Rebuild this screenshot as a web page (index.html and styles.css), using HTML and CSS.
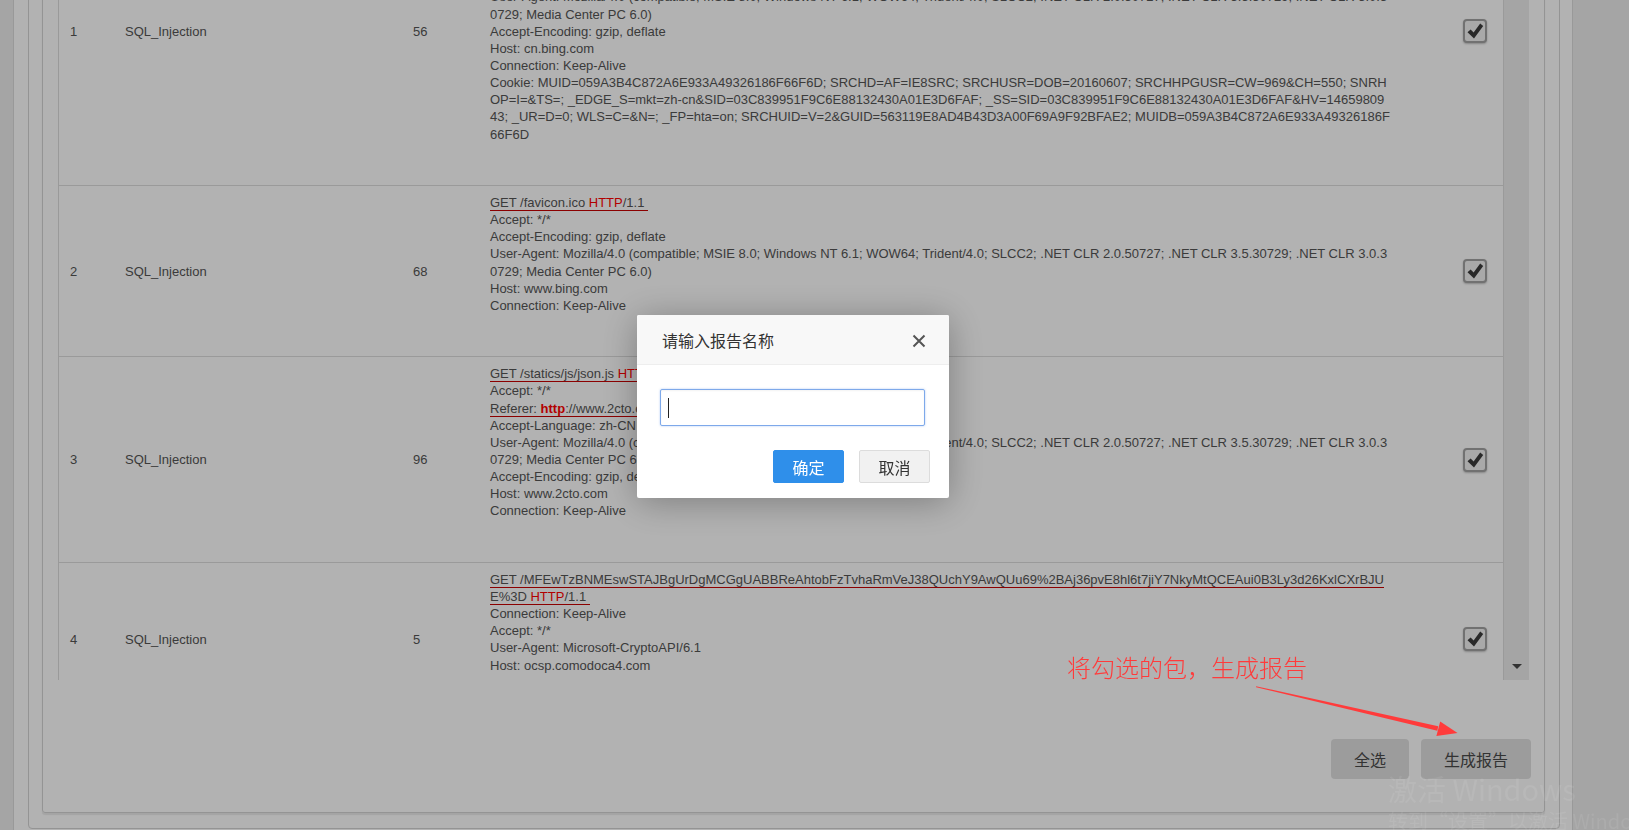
FILE: index.html
```html
<!DOCTYPE html>
<html lang="zh-CN">
<head>
<meta charset="utf-8">
<title>报告</title>
<link rel="stylesheet" href="styles.css">
</head>
<body>
<div class="page">
  <div class="panel">
    <div class="inner">
      <div class="grid-area">
        <div class="viewport">
          <table class="pkts">
            <colgroup>
              <col class="c-no"><col class="c-name"><col class="c-len"><col class="c-data"><col class="c-chk">
            </colgroup>
            <tbody>
              <tr>
                <td class="no">1</td>
                <td>SQL_Injection</td>
                <td>56</td>
                <td class="data">
                  <div class="req">
                    <div><span class="reqline">GET /fd/ls/GLinkPing.aspx?IG=2A7C0C1F3B9A4E0D9F5E1B2C3D4E5F60 <span class="proto">HTTP</span>/1.1&nbsp;</span></div>
                    <div>Accept: */*</div>
                    <div>Referer: http://cn.bing.com/</div>
                    <div>Accept-Language: zh-CN</div>
                    <div>Content-Type: text/plain;charset=UTF-8</div>
                    <div>X-Requested-With: XMLHttpRequest</div>
                    <div>User-Agent: Mozilla/4.0 (compatible; MSIE 8.0; Windows NT 6.1; WOW64; Trident/4.0; SLCC2; .NET CLR 2.0.50727; .NET CLR 3.5.30729; .NET CLR 3.0.3<br>0729; Media Center PC 6.0)</div>
                    <div>Accept-Encoding: gzip, deflate</div>
                    <div>Host: cn.bing.com</div>
                    <div>Connection: Keep-Alive</div>
                    <div>Cookie: MUID=059A3B4C872A6E933A49326186F66F6D; SRCHD=AF=IE8SRC; SRCHUSR=DOB=20160607; SRCHHPGUSR=CW=969&amp;CH=550; SNRH<br>OP=I=&amp;TS=; _EDGE_S=mkt=zh-cn&amp;SID=03C839951F9C6E88132430A01E3D6FAF; _SS=SID=03C839951F9C6E88132430A01E3D6FAF&amp;HV=14659809<br>43; _UR=D=0; WLS=C=&amp;N=; _FP=hta=on; SRCHUID=V=2&amp;GUID=563119E8AD4B43D3A00F69A9F92BFAE2; MUIDB=059A3B4C872A6E933A49326186F<br>66F6D</div>
                  </div>
                </td>
                <td class="chkcell"><span class="chk"><svg viewBox="0 0 20 20" width="20" height="20"><path d="M2.5 11.2 L5.6 8.4 L8.6 11.6 L15.2 2.6 L18.2 5 L9 17.4 Z" fill="#3c3c3c"/></svg></span></td>
              </tr>
              <tr>
                <td class="no">2</td>
                <td>SQL_Injection</td>
                <td>68</td>
                <td class="data">
                  <div class="req">
                    <div><span class="reqline">GET /favicon.ico <span class="proto">HTTP</span>/1.1&nbsp;</span></div>
                    <div>Accept: */*</div>
                    <div>Accept-Encoding: gzip, deflate</div>
                    <div>User-Agent: Mozilla/4.0 (compatible; MSIE 8.0; Windows NT 6.1; WOW64; Trident/4.0; SLCC2; .NET CLR 2.0.50727; .NET CLR 3.5.30729; .NET CLR 3.0.3<br>0729; Media Center PC 6.0)</div>
                    <div>Host: www.bing.com</div>
                    <div>Connection: Keep-Alive</div>
                  </div>
                </td>
                <td class="chkcell"><span class="chk"><svg viewBox="0 0 20 20" width="20" height="20"><path d="M2.5 11.2 L5.6 8.4 L8.6 11.6 L15.2 2.6 L18.2 5 L9 17.4 Z" fill="#3c3c3c"/></svg></span></td>
              </tr>
              <tr>
                <td class="no">3</td>
                <td>SQL_Injection</td>
                <td>96</td>
                <td class="data">
                  <div class="req">
                    <div><span class="reqline">GET /statics/js/json.js <span class="proto">HTTP</span>/1.1&nbsp;</span></div>
                    <div>Accept: */*</div>
                    <div><span class="reqline">Referer: <b class="proto">http</b>://www.2cto.com/article/201606/519380.html</span></div>
                    <div>Accept-Language: zh-CN</div>
                    <div>User-Agent: Mozilla/4.0 (compatible; MSIE 8.0; Windows NT 6.1; WOW64; Trident/4.0; SLCC2; .NET CLR 2.0.50727; .NET CLR 3.5.30729; .NET CLR 3.0.3<br>0729; Media Center PC 6.0)</div>
                    <div>Accept-Encoding: gzip, deflate</div>
                    <div>Host: www.2cto.com</div>
                    <div>Connection: Keep-Alive</div>
                  </div>
                </td>
                <td class="chkcell"><span class="chk"><svg viewBox="0 0 20 20" width="20" height="20"><path d="M2.5 11.2 L5.6 8.4 L8.6 11.6 L15.2 2.6 L18.2 5 L9 17.4 Z" fill="#3c3c3c"/></svg></span></td>
              </tr>
              <tr>
                <td class="no">4</td>
                <td>SQL_Injection</td>
                <td>5</td>
                <td class="data">
                  <div class="req">
                    <div><span class="reqline">GET /MFEwTzBNMEswSTAJBgUrDgMCGgUABBReAhtobFzTvhaRmVeJ38QUchY9AwQUu69%2BAj36pvE8hl6t7jiY7NkyMtQCEAui0B3Ly3d26KxlCXrBJU<br>E%3D <span class="proto">HTTP</span>/1.1&nbsp;</span></div>
                    <div>Connection: Keep-Alive</div>
                    <div>Accept: */*</div>
                    <div>User-Agent: Microsoft-CryptoAPI/6.1</div>
                    <div>Host: ocsp.comodoca4.com</div>
                  </div>
                </td>
                <td class="chkcell"><span class="chk"><svg viewBox="0 0 20 20" width="20" height="20"><path d="M2.5 11.2 L5.6 8.4 L8.6 11.6 L15.2 2.6 L18.2 5 L9 17.4 Z" fill="#3c3c3c"/></svg></span></td>
              </tr>
            </tbody>
          </table>
        </div>
        <div class="rail"><span class="rail-down"></span></div>
      </div>
      <div class="actions">
        <button class="btn btn-all">全选</button>
        <button class="btn btn-gen">生成报告</button>
      </div>
    </div>
  </div>
</div>

<div class="backdrop"></div>

<div class="modal">
  <div class="modal-head">
    <span class="modal-title">请输入报告名称</span>
    <svg class="modal-close" viewBox="0 0 14 14" width="14" height="14"><path d="M1.5 1.5 L12.5 12.5 M12.5 1.5 L1.5 12.5" stroke="#555" stroke-width="2" fill="none"/></svg>
  </div>
  <div class="modal-body">
    <div class="name-input"><span class="caret"></span></div>
  </div>
  <div class="modal-foot">
    <button class="mbtn mbtn-ok">确定</button>
    <button class="mbtn mbtn-cancel">取消</button>
  </div>
</div>

<div class="annot">将勾选的包，生成报告</div>
<svg class="arrow" width="1629" height="830" viewBox="0 0 1629 830">
  <polygon points="1256,686.2 1256.2,687.3 1437.3,730.8 1438.2,726.2" fill="#ff3b3b"/>
  <polygon points="1457.5,733 1440.2,721.4 1436.4,736" fill="#ff3b3b"/>
</svg>

<div class="watermark">
  <div class="wm-1">激活 Windows</div>
  <div class="wm-2">转到“设置”以激活 Windows。</div>
</div>
</body>
</html>
```

FILE: styles.css
```css
* { box-sizing: border-box; }

html, body {
  margin: 0;
  height: 830px;
  overflow: hidden;
}

body {
  position: relative;
  background: #ededed;
  font-family: "Liberation Sans", Arial, "Noto Sans CJK SC", sans-serif;
  color: #555;
}

.page {
  margin-left: 13px;
  width: 1560px;
  height: 830px;
  background: #fff;
  border-left: 1px solid #dcdcdc;
  border-right: 1px solid #dcdcdc;
  display: flex;
  flex-direction: column;
  justify-content: flex-end;
  overflow: hidden;
}

.panel {
  flex: none;
  margin: 0 12px 1px 14px;
  border: 1px solid #d4d4d4;
  border-radius: 4px;
  padding: 13px 14px 15px 13px;
}

.inner {
  border: 1px solid #d4d4d4;
  border-radius: 3px;
  padding: 15px 15px 33px 15px;
  box-shadow: 0 2px 1px rgba(0, 0, 0, 0.08);
}

.grid-area {
  display: flex;
  height: 680px;
}

.viewport {
  flex: 1;
  border-left: 1px solid #ddd;
  overflow: hidden;
}

.pkts {
  width: 1444px;
  table-layout: fixed;
  border-collapse: collapse;
  margin-top: -123.4px;
  font-size: 13px;
  line-height: 17.1428px;
  color: #555;
}

.c-no { width: 58px; }
.c-name { width: 288px; }
.c-len { width: 77px; }
.c-data { width: 934px; }
.c-chk { width: 87px; }

.pkts td {
  border-top: 1px solid #ddd;
  padding: 8px;
  vertical-align: middle;
}

.pkts td.no { padding-left: 11px; }

.req {
  white-space: nowrap;
  padding-bottom: 34.2857px;
}

.reqline {
  border-bottom: 1px solid #c80000;
}

.proto {
  color: #f00;
  font-weight: normal;
}

b.proto { font-weight: bold; }

.chkcell {
  text-align: right;
  padding-right: 16px !important;
}

.chk {
  display: inline-flex;
  align-items: center;
  justify-content: center;
  width: 24px;
  height: 24px;
  border: 2px solid #a2a2a2;
  border-radius: 4px;
  background: #f2f2f2;
  box-shadow: 0 1px 2px rgba(0, 0, 0, 0.25);
  vertical-align: middle;
}

.rail {
  width: 26px;
  background: #ececec;
  border-left: 1px solid #ddd;
  display: flex;
  flex-direction: column;
  justify-content: flex-end;
  align-items: center;
  padding-bottom: 11px;
}

.rail-down {
  width: 0;
  height: 0;
  border-left: 5px solid transparent;
  border-right: 5px solid transparent;
  border-top: 5px solid #4a4a4a;
}

.actions {
  display: flex;
  justify-content: flex-end;
  gap: 12px;
  margin-top: 59px;
  margin-right: -2px;
}

.btn {
  height: 40px;
  border: 0;
  border-radius: 4px;
  background: #e0e0e0;
  color: #4a4a4a;
  font: 16px "Noto Sans CJK SC", sans-serif;
  padding: 0;
}

.btn-all { width: 78px; }
.btn-gen { width: 110px; }

.backdrop {
  position: fixed;
  inset: 0;
  background: rgba(0, 0, 0, 0.3);
}

.modal {
  position: fixed;
  left: 637px;
  top: 315px;
  width: 312px;
  background: #fff;
  border-radius: 2px;
  box-shadow: 0 4px 36px rgba(0, 0, 0, 0.3);
  font-family: "Noto Sans CJK SC", sans-serif;
}

.modal-head {
  height: 50px;
  background: #f8f8f8;
  border-bottom: 1px solid #eee;
  border-radius: 2px 2px 0 0;
  display: flex;
  align-items: center;
  justify-content: space-between;
  padding: 0 23px 0 25px;
}

.modal-title {
  font-size: 16px;
  color: #333;
}

.modal-close { display: block; margin-top: 3px; }

.modal-body {
  padding: 24px 24px 0 23px;
}

.name-input {
  height: 37px;
  border: 1px solid #7ea9ea;
  border-radius: 2px;
  box-shadow: 0 0 2px rgba(82, 140, 236, 0.5), inset 0 1px 2px rgba(0, 0, 0, 0.05);
  display: flex;
  align-items: center;
  padding-left: 7px;
}

.caret {
  width: 1px;
  height: 20px;
  background: #222;
}

.modal-foot {
  display: flex;
  justify-content: flex-end;
  gap: 15px;
  padding: 24px 19px 15px 0;
}

.mbtn {
  width: 71px;
  height: 33px;
  border-radius: 2px;
  font: 16px "Noto Sans CJK SC", sans-serif;
  padding: 0;
}

.mbtn-ok {
  background: #2f8fea;
  border: 1px solid #2f8fea;
  color: #fff;
}

.mbtn-cancel {
  background: #f1f1f1;
  border: 1px solid #dcdcdc;
  color: #333;
}

.annot {
  position: absolute;
  left: 1067px;
  top: 653px;
  font-family: "Noto Sans CJK SC", sans-serif;
  font-weight: 300;
  font-size: 24px;
  line-height: 28px;
  color: #ff3b3b;
  white-space: nowrap;
}

.arrow {
  position: absolute;
  left: 0;
  top: 0;
  pointer-events: none;
}

.watermark {
  position: absolute;
  left: 1388px;
  top: 769px;
  color: rgba(255, 255, 255, 0.08);
  font-family: "Noto Sans CJK SC", "Liberation Sans", sans-serif;
  white-space: nowrap;
}

.wm-1 { font-size: 29px; line-height: 38px; }
.wm-2 { font-size: 20px; line-height: 28px; }
```
